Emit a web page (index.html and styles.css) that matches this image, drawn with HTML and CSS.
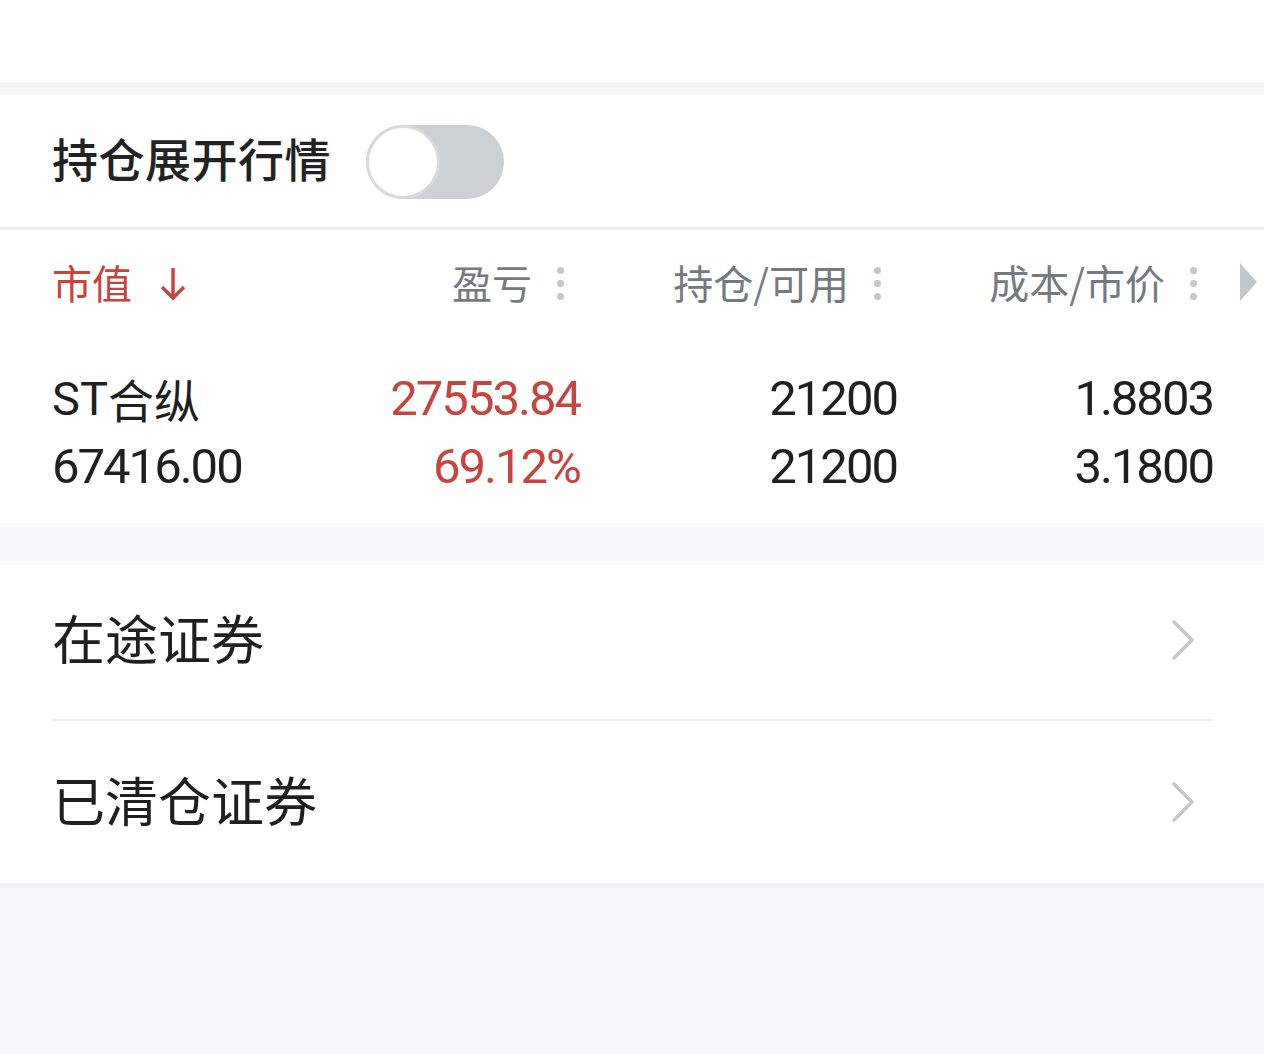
FILE: index.html
```html
<!DOCTYPE html>
<html lang="zh-CN">
<head>
<meta charset="utf-8">
<title>持仓</title>
<link rel="stylesheet" href="styles.css">
</head>
<body>
<div class="topbar"></div>
<div class="band"></div>
<section class="holdings">
  <div class="toggle-row">
    <span class="toggle-label">持仓展开行情</span>
    <span class="switch"><span class="knob"></span></span>
  </div>
  <div class="table">
    <div class="th th-first active">
      <span>市值</span>
      <svg class="sort-arrow" width="26" height="34" viewBox="0 0 26 34"><path d="M13 1 V31 M2 20 L13 31 L24 20" fill="none" stroke="#c9423c" stroke-width="3.4"/></svg>
    </div>
    <div class="th"><span>盈亏</span><span class="dots"><i></i><i></i><i></i></span></div>
    <div class="th"><span>持仓/可用</span><span class="dots"><i></i><i></i><i></i></span></div>
    <div class="th"><span>成本/市价</span><span class="dots"><i></i><i></i><i></i></span></div>
    <div class="th th-more"><svg width="17" height="38" viewBox="0 0 17 38"><path d="M0 0 L17 19 L0 38 Z" fill="#c3c6ca"/></svg></div>

    <div class="td td-first name">ST<span class="cjk">合纵</span></div>
    <div class="td red">27553.84</div>
    <div class="td">21200</div>
    <div class="td">1.8803</div>
    <div class="td"></div>

    <div class="td td-first">67416.00</div>
    <div class="td red">69.12%</div>
    <div class="td">21200</div>
    <div class="td">3.1800</div>
    <div class="td"></div>
  </div>
</section>
<div class="band band-mid"></div>
<section class="links">
  <div class="link-row">
    <span class="link-text">在途证券</span>
    <svg class="chev" width="26" height="42" viewBox="0 0 26 42"><path d="M4 3 L22 21 L4 39" fill="none" stroke="#c8c8c8" stroke-width="3.6" stroke-linecap="round" stroke-linejoin="round"/></svg>
  </div>
  <div class="link-row last">
    <span class="link-text">已清仓证券</span>
    <svg class="chev" width="26" height="42" viewBox="0 0 26 42"><path d="M4 3 L22 21 L4 39" fill="none" stroke="#c8c8c8" stroke-width="3.6" stroke-linecap="round" stroke-linejoin="round"/></svg>
  </div>
</section>
</body>
</html>
```

FILE: styles.css
```css
html, body {
  margin: 0;
  padding: 0;
}
body {
  background: #f4f5f8;
  font-family: "Roboto", "Noto Sans CJK SC", sans-serif;
  color: #1f1f1f;
  width: 1264px;
  height: 1054px;
  overflow: hidden;
}
.topbar {
  height: 82px;
  background: #ffffff;
}
.band {
  height: 13px;
  background: #f4f5f8;
}
.band-mid {
  height: 34px;
}
.holdings {
  background: #ffffff;
}
.toggle-row {
  height: 132px;
  display: flex;
  align-items: center;
  padding-left: 52px;
  border-bottom: 3px solid #ececee;
}
.toggle-label {
  font-family: "Noto Sans CJK SC", sans-serif;
  font-size: 46px;
  font-weight: 500;
  color: #222;
  letter-spacing: 0.5px;
  padding-bottom: 8px;
}
.switch {
  margin-left: 35px;
  width: 138px;
  height: 74px;
  border-radius: 37px;
  background: #cdd0d4;
  display: flex;
  align-items: center;
  margin-top: 2px;
}
.knob {
  width: 68px;
  height: 68px;
  border-radius: 50%;
  background: #fff;
  border: 3px solid #d8dadc;
}
.table {
  display: grid;
  grid-template-columns: 278px 250px 317px 316px 51px;
  grid-template-rows: 134px 68px 68px;
  padding: 0 0 27px 52px;
}
.th {
  display: flex;
  align-items: center;
  justify-content: flex-end;
  padding-right: 16px;
  padding-bottom: 30px;
  font-family: "Noto Sans CJK SC", sans-serif;
  font-size: 40px;
  color: #747a81;
  gap: 25px;
}
.th-first {
  justify-content: flex-start;
  padding-right: 0;
  gap: 28px;
}
.th.active {
  color: #c9423c;
}
.sort-arrow {
  margin-top: 4px;
}
.th-more {
  justify-content: flex-end;
  padding-right: 7px;
  gap: 0;
}
.dots {
  display: flex;
  flex-direction: column;
  gap: 6px;
  margin-top: 3px;
}
.dots i {
  display: block;
  width: 7px;
  height: 7px;
  border-radius: 50%;
  background: #c4c7cb;
}
.td {
  display: flex;
  align-items: center;
  justify-content: flex-end;
  font-size: 49px;
  letter-spacing: -2px;
  color: #1f1f1f;
}
.td-first {
  justify-content: flex-start;
}
.td.red {
  color: #c8443e;
}
.name {
  font-size: 47px;
  letter-spacing: 0;
}
.cjk {
  font-family: "Noto Sans CJK SC", sans-serif;
  font-size: 46px;
}
.links {
  background: #ffffff;
  padding: 0 51px 0 52px;
}
.link-row {
  height: 158px;
  display: flex;
  align-items: center;
  justify-content: space-between;
  border-bottom: 2px solid #eeeeee;
  font-family: "Noto Sans CJK SC", sans-serif;
  font-size: 53px;
  color: #1f1f1f;
}
.link-row.last {
  height: 162px;
  border-bottom: none;
}
.link-text {
  padding-bottom: 6px;
}
.chev {
  margin-right: 17px;
}
```
